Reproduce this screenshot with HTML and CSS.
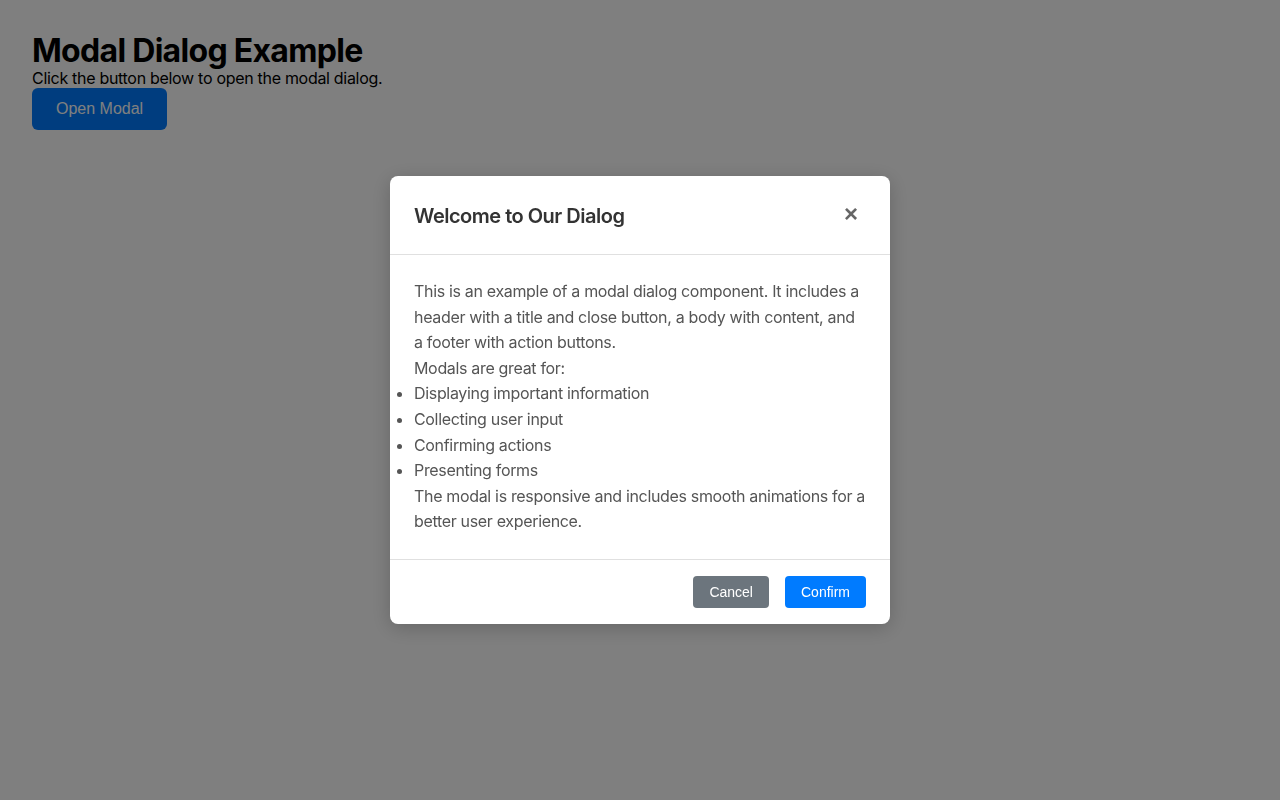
FILE: index.html
```html
<!DOCTYPE html>
<html lang="en">
<head>
    <meta charset="UTF-8">
    <meta name="viewport" content="width=device-width, initial-scale=1.0">
    <title>Modal Dialog Example</title>
    <link rel="stylesheet" href="styles.css">
</head>
<body>
    <div class="page">
        <h1>Modal Dialog Example</h1>
        <p>Click the button below to open the modal dialog.</p>
        <button class="open-btn">Open Modal</button>
    </div>

    <div class="modal-overlay">
        <div class="modal">
            <div class="modal-header">
                <h2>Welcome to Our Dialog</h2>
                <button class="close-btn" aria-label="Close">&times;</button>
            </div>
            <div class="modal-body">
                <p>This is an example of a modal dialog component. It includes a header with a title and close button, a body with content, and a footer with action buttons.</p>
                <p>Modals are great for:</p>
                <ul>
                    <li>Displaying important information</li>
                    <li>Collecting user input</li>
                    <li>Confirming actions</li>
                    <li>Presenting forms</li>
                </ul>
                <p>The modal is responsive and includes smooth animations for a better user experience.</p>
            </div>
            <div class="modal-footer">
                <button class="btn btn-cancel">Cancel</button>
                <button class="btn btn-confirm">Confirm</button>
            </div>
        </div>
    </div>
</body>
</html>
```

FILE: styles.css
```css
* {
    margin: 0;
    padding: 0;
    box-sizing: border-box;
}

body {
    font-family: Inter, "Noto Sans", sans-serif;
    background: white;
    color: #000;
}

.page {
    padding: 32px;
}

.page h1 {
    font-size: 32px;
    font-weight: 700;
    line-height: 37px;
    letter-spacing: -0.7px;
}

.page p {
    font-size: 16px;
    line-height: 19px;
    letter-spacing: -0.3px;
}

.open-btn {
    background: #007bff;
    color: white;
    border: none;
    border-radius: 6px;
    padding: 12px 24px;
    font-family: "Liberation Sans", Arial, sans-serif;
    font-size: 16px;
    cursor: pointer;
}

.modal-overlay {
    position: fixed;
    inset: 0;
    background: rgba(0, 0, 0, 0.5);
    display: flex;
    align-items: center;
    justify-content: center;
}

.modal {
    background: white;
    width: 500px;
    border-radius: 8px;
    box-shadow: 0 4px 20px rgba(0, 0, 0, 0.2);
    overflow: hidden;
}

.modal-header {
    display: flex;
    align-items: center;
    justify-content: space-between;
    padding: 25px 24px 23px;
    border-bottom: 1px solid #e0e0e0;
}

.modal-header h2 {
    font-size: 20px;
    font-weight: 600;
    line-height: 30px;
    letter-spacing: -0.5px;
    color: #333;
}

.close-btn {
    width: 30px;
    height: 30px;
    margin-top: -4px;
    border: none;
    background: none;
    color: #666;
    font-size: 24px;
    font-weight: 600;
    line-height: 1;
    cursor: pointer;
}

.modal-body {
    padding: 24px;
    font-size: 16px;
    line-height: 1.6;
    letter-spacing: -0.33px;
    color: #555;
}

.modal-body ul {
    list-style-position: outside;
}

.modal-footer {
    display: flex;
    justify-content: flex-end;
    gap: 16px;
    padding: 16px 24px;
    border-top: 1px solid #e0e0e0;
}

.btn {
    border: none;
    border-radius: 4px;
    padding: 8px 16px;
    font-family: "Liberation Sans", Arial, sans-serif;
    font-size: 14px;
    line-height: 16px;
    color: white;
    cursor: pointer;
}

.btn-cancel {
    background: #6c757d;
}

.btn-confirm {
    background: #007bff;
}
```
